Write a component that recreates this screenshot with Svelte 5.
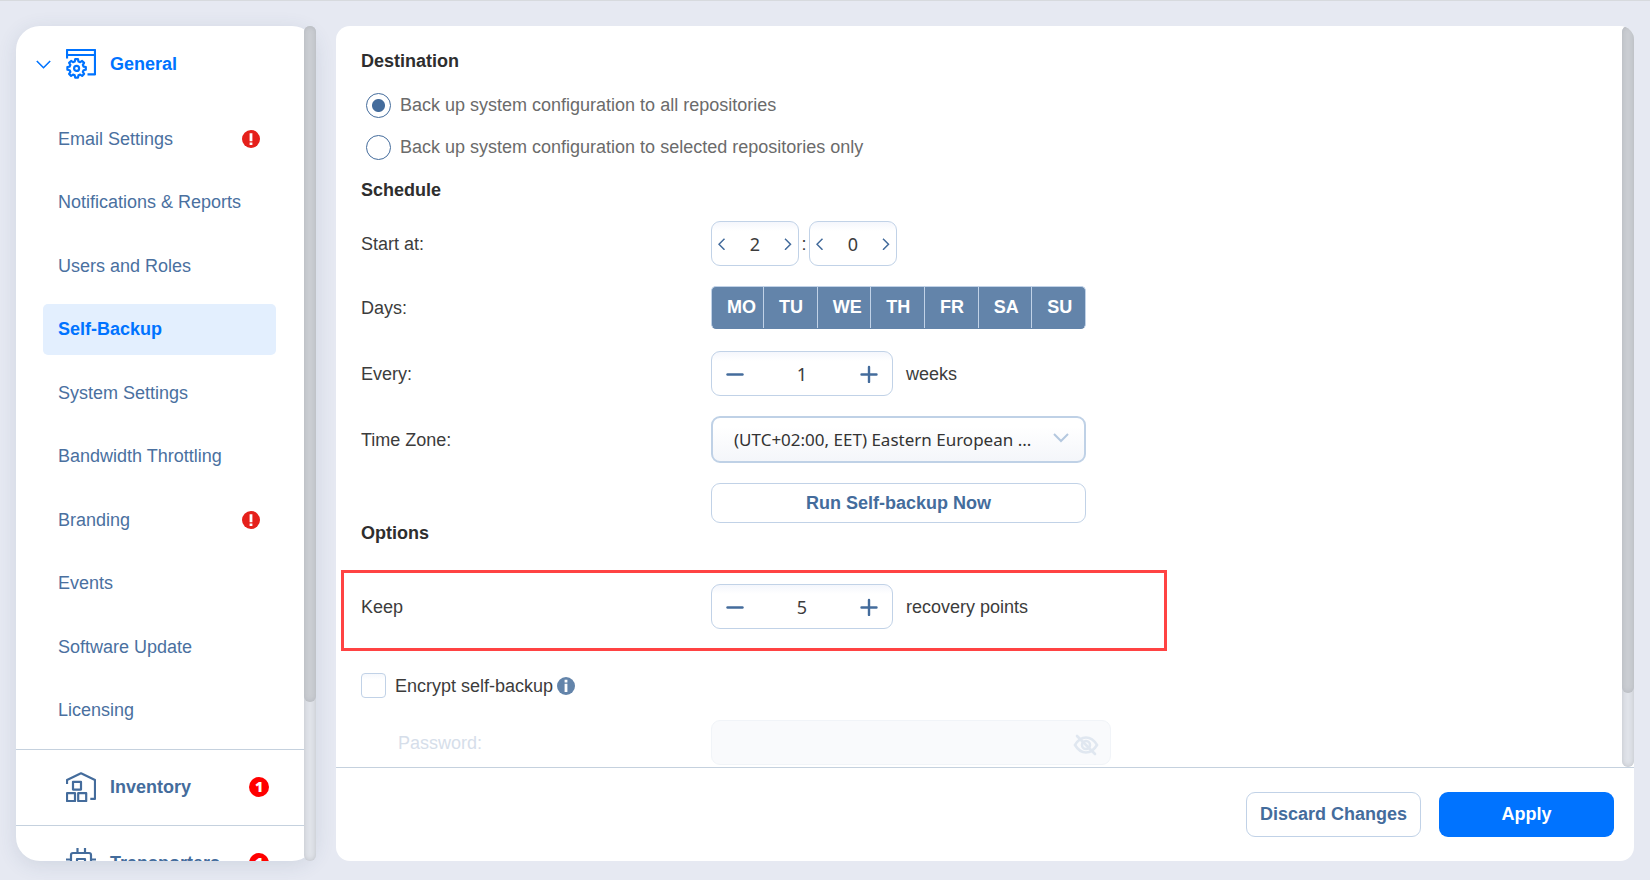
<script>
  const pages = [
    { label: 'Email Settings', alert: true },
    { label: 'Notifications & Reports' },
    { label: 'Users and Roles' },
    { label: 'Self-Backup' },
    { label: 'System Settings' },
    { label: 'Bandwidth Throttling' },
    { label: 'Branding', alert: true },
    { label: 'Events' },
    { label: 'Software Update' },
    { label: 'Licensing' }
  ];
  const dayNames = ['MO', 'TU', 'WE', 'TH', 'FR', 'SA', 'SU'];

  let current = $state('Self-Backup');
  let target = $state('all');
  let hour = $state(2);
  let minute = $state(0);
  let weeks = $state(1);
  let points = $state(5);
  let encrypt = $state(false);
  let days = $state(dayNames.map(() => true));

  // Outline of an eight-toothed gear around (cx, cy).
  function gear(cx, cy, outer, inner) {
    const pts = [];
    for (let i = 0; i < 8; i++) {
      const a = (i * Math.PI) / 4 - Math.PI / 2;
      for (const [r, d] of [[inner, -0.26], [outer, -0.15], [outer, 0.15], [inner, 0.26]]) {
        pts.push(`${(cx + r * Math.cos(a + d)).toFixed(2)} ${(cy + r * Math.sin(a + d)).toFixed(2)}`);
      }
    }
    return `M${pts.join('L')}Z`;
  }
  const gearPath = gear(10.6, 19.4, 9.3, 7.2);
</script>

{#snippet stepper(id, name, value, step)}
  <div class="stepper">
    <button type="button" aria-label="Decrease" onclick={() => step(-1)}>
      <svg width="18" height="18" viewBox="0 0 18 18"><path d="M1.5 9.5H16.5" /></svg>
    </button>
    <input {id} type="text" aria-label={name} {value} readonly />
    <button type="button" aria-label="Increase" onclick={() => step(1)}>
      <svg width="18" height="18" viewBox="0 0 18 18"><path d="M1.5 9.5H16.5M9 2V17" /></svg>
    </button>
  </div>
{/snippet}

{#snippet spinner(id, name, value, step)}
  <div class="spinner">
    <button type="button" aria-label="Previous" onclick={() => step(-1)}>
      <svg width="8" height="12" viewBox="0 0 8 12"><path d="M6.5 .8L1 6.3L6.5 11.8" /></svg>
    </button>
    <input {id} type="text" aria-label={name} {value} readonly />
    <button type="button" aria-label="Next" onclick={() => step(1)}>
      <svg width="8" height="12" viewBox="0 0 8 12"><path d="M1 .8L6.5 6.3L1 11.8" /></svg>
    </button>
  </div>
{/snippet}

<div class="page">
  <nav class="sidebar">
    <div class="menu">
      <section>
        <a class="group active" href="#general">
          <svg class="chevron" width="15" height="9" viewBox="0 0 15 9"><path d="M.8 1L7.5 7.7L14.2 1" /></svg>
          <svg class="icon" width="30" height="30" viewBox="0 0 30 30">
            <path d="M1 9.5V1H29V25.3H21.5M1 6H29" />
            <path d={gearPath} />
            <circle cx="10.6" cy="19.4" r="2.5" />
          </svg>
          <span>General</span>
        </a>
        <ul>
          {#each pages as page}
            <li>
              <a
                href="#page"
                class:selected={page.label === current}
                onclick={(e) => { e.preventDefault(); current = page.label; }}
              >
                <span>{page.label}</span>
                {#if page.alert}
                  <svg width="18" height="18" viewBox="0 0 18 18">
                    <circle cx="9" cy="9" r="9" fill="#e5201b" />
                    <path d="M9 3.2V11.2M9 12.6V15" stroke="#fff" stroke-width="2.8" />
                  </svg>
                {/if}
              </a>
            </li>
          {/each}
        </ul>
      </section>
      <section class="ruled">
        <a class="group" href="#inventory">
          <i class="chevron"></i>
          <svg class="icon" width="30" height="30" viewBox="0 0 30 30">
            <path d="M1 12V8L15 1.3L29 8V26.8H24.3" />
            <rect x="7" y="9.8" width="8" height="7.8" />
            <rect x="1" y="21.2" width="8" height="7.8" />
            <rect x="12.2" y="21.2" width="8" height="7.8" />
          </svg>
          <span>Inventory</span>
          <b class="count">1</b>
        </a>
      </section>
      <section class="ruled">
        <a class="group" href="#transporters">
          <i class="chevron"></i>
          <svg class="icon" width="30" height="30" viewBox="0 0 30 30">
            <rect x="5" y="5" width="20" height="20" rx="2" />
            <rect x="11" y="11" width="8" height="8" />
            <path d="M11.5 0V5M19 0V5M11.5 25V30M19 25V30M0 11.5H5M0 19H5M25 11.5H30M25 19H30" />
          </svg>
          <span>Transporters</span>
          <b class="count">1</b>
        </a>
      </section>
    </div>
    <div class="track"><div class="thumb"></div></div>
  </nav>

  <main>
    <div class="body">
      <form class="content" onsubmit={(e) => e.preventDefault()}>
        <h2>Destination</h2>
        <div class="radios">
          <label><input type="radio" name="target" value="all" bind:group={target} /> Back up system configuration to all repositories</label>
          <label><input type="radio" name="target" value="selected" bind:group={target} /> Back up system configuration to selected repositories only</label>
        </div>

        <h2>Schedule</h2>
        <div class="row start">
          <label for="hour">Start at:</label>
          <div class="time">
            {@render spinner('hour', 'Hour', hour, (d) => (hour = (hour + d + 24) % 24))}
            <span>:</span>
            {@render spinner('minute', 'Minute', minute, (d) => (minute = (minute + d + 60) % 60))}
          </div>
        </div>
        <div class="row">
          <span>Days:</span>
          <div class="days">
            {#each dayNames as day, i}
              <button type="button" aria-pressed={days[i]} onclick={() => (days[i] = !days[i])}>{day}</button>
            {/each}
          </div>
        </div>
        <div class="row every">
          <label for="weeks">Every:</label>
          <div class="amount">
            {@render stepper('weeks', 'Weeks', weeks, (d) => (weeks = Math.max(1, weeks + d)))}
            <span>weeks</span>
          </div>
        </div>
        <div class="row">
          <label for="zone">Time Zone:</label>
          <div class="select">
            <select id="zone"><option>(UTC+02:00, EET) Eastern European ...</option></select>
            <svg width="16" height="10" viewBox="0 0 16 10"><path d="M1 1L8 8L15 1" /></svg>
          </div>
        </div>
        <div class="row">
          <span></span>
          <button type="button" class="run">Run Self-backup Now</button>
        </div>

        <h2>Options</h2>
        <div class="highlight">
          <div class="row">
            <label for="points">Keep</label>
            <div class="amount">
              {@render stepper('points', 'Recovery points', points, (d) => (points = Math.max(1, points + d)))}
              <span>recovery points</span>
            </div>
          </div>
        </div>
        <div class="encrypt">
          <input id="encrypt" type="checkbox" bind:checked={encrypt} />
          <label for="encrypt">Encrypt self-backup</label>
          <svg width="18" height="18" viewBox="0 0 18 18">
            <circle cx="9" cy="9" r="9" fill="#6384aa" />
            <path d="M9 2.8V5.4M9 6.8V15" stroke="#fff" stroke-width="2.8" />
          </svg>
        </div>
        <div class="row secret">
          <label for="password">Password:</label>
          <div class="password">
            <input id="password" type="password" disabled={!encrypt} />
            <svg width="26" height="22" viewBox="0 0 26 22">
              <path d="M2 11C5 6 9 3.5 13 3.5S21 6 24 11C21 16 17 18.5 13 18.5S5 16 2 11Z" />
              <circle cx="13" cy="11" r="4" />
              <path d="M4 2L22 20" />
            </svg>
          </div>
        </div>
      </form>
      <div class="track"><div class="thumb"></div></div>
    </div>
    <footer>
      <button type="button" class="discard">Discard Changes</button>
      <button type="button" class="apply">Apply</button>
    </footer>
  </main>
</div>

<style>
  :global(body) {
    background: #e6e9f2;
  }
  .page, .page :global(*) {
    box-sizing: border-box;
  }
  .page {
    display: grid;
    grid-template-columns: 300px 1fr;
    gap: 20px;
    height: 100vh;
    padding: 25px 16px 19px;
    border-top: 1px solid #d7dade;
    font-family: "Liberation Sans", Arial, sans-serif;
    font-size: 18px;
    line-height: 20px;
    color: #3c3c3c;
  }
  button, input, select {
    margin: 0;
    padding: 0;
    font: inherit;
    color: inherit;
  }
  button {
    border: 0;
    background: none;
    cursor: pointer;
  }
  svg {
    flex: none;
    fill: none;
  }
  a {
    text-decoration: none;
    color: inherit;
  }

  .track {
    flex: none;
    width: 12px;
    border-radius: 6px;
    background: #e0e3e9;
    box-shadow: inset 0 0 5px rgba(90, 96, 104, 0.25);
  }
  .thumb {
    border-radius: 6px;
    background: #cacdd2;
    box-shadow: inset 0 0 5px rgba(90, 96, 104, 0.2);
  }

  .sidebar {
    display: flex;
    min-height: 0;
    border-radius: 24px;
    background: #fff;
    box-shadow: 0 4px 20px rgba(50, 70, 110, 0.12);
    color: #4a709f;
  }
  .sidebar .thumb {
    height: 81%;
  }
  .menu {
    flex: 1;
    overflow: hidden;
    border-radius: 24px 0 0 24px;
  }
  .ruled {
    border-top: 1px solid #c5d1de;
  }
  .group {
    display: flex;
    align-items: center;
    height: 75px;
    padding: 0 35px 2px 20px;
    font-weight: bold;
    color: #446c9c;
  }
  .active {
    height: 76px;
    padding-bottom: 0;
    color: #0073ff;
  }
  .group span {
    flex: 1;
  }
  .chevron {
    width: 15px;
    margin-right: 15px;
    stroke: currentColor;
    stroke-width: 1.6;
  }
  .icon {
    margin-right: 14px;
    stroke: currentColor;
    stroke-width: 2.2;
    stroke-linejoin: round;
  }
  .count {
    width: 20px;
    border-radius: 50%;
    background: #f00;
    color: #fff;
    font-family: "Noto Sans", sans-serif;
    font-size: 14px;
    text-align: center;
  }
  ul {
    display: flex;
    flex-direction: column;
    justify-content: space-between;
    min-height: 636px;
    margin: 11px 28px 0 27px;
    padding: 0 0 13px;
    list-style: none;
  }
  li a {
    display: flex;
    align-items: center;
    justify-content: space-between;
    height: 51px;
    padding: 0 16px 0 15px;
    border-radius: 5px;
    white-space: nowrap;
  }
  li a.selected {
    background: #e3effe;
    font-weight: bold;
    color: #0073ff;
  }

  main {
    display: flex;
    flex-direction: column;
    min-width: 0;
    min-height: 0;
    overflow: hidden;
    border-radius: 14px;
    background: #fff;
  }
  .body {
    display: flex;
    flex: 1;
    min-height: 0;
  }
  .body .thumb {
    height: 90%;
  }
  .content {
    flex: 1;
    overflow: hidden;
    padding: 25px 25px 0;
  }
  h2 {
    margin: 0;
    font-size: 18px;
    line-height: 20px;
    color: #2e2e2e;
  }
  .radios {
    padding: 13px 5px 12px;
    color: #6b6b6b;
  }
  .radios label {
    display: flex;
    align-items: center;
    gap: 9px;
    height: 42px;
  }
  input[type="radio"] {
    appearance: none;
    width: 25px;
    height: 25px;
    border: 1px solid #446c9c;
    border-radius: 50%;
  }
  input[type="radio"]:checked {
    background: radial-gradient(circle, #446c9c 6px, transparent 7px);
  }

  .row {
    display: grid;
    grid-template-columns: 350px 1fr;
    align-items: center;
    margin-top: 20px;
  }
  .start {
    margin-top: 21px;
  }
  .every {
    margin-top: 22px;
  }
  .time, .amount {
    display: flex;
    align-items: center;
  }
  .time span {
    width: 10px;
    text-align: center;
  }
  .amount {
    gap: 13px;
  }
  .spinner, .stepper {
    display: flex;
    height: 45px;
    border: 1px solid #c1d2e7;
    border-radius: 9px;
    background: linear-gradient(#f4f6fc, #fff 9px);
    font-family: "Noto Sans", sans-serif;
  }
  .spinner {
    width: 88px;
  }
  .stepper {
    width: 182px;
  }
  .spinner input, .stepper input {
    flex: 1;
    min-width: 0;
    border: 0;
    background: none;
    text-align: center;
  }
  .spinner button, .stepper button {
    display: grid;
    place-items: center;
    width: 20px;
    stroke: #446c9c;
  }
  .spinner button {
    stroke-width: 1.5;
  }
  .stepper button {
    width: 46px;
    stroke-width: 2.4;
    stroke-linecap: round;
  }
  .days {
    display: grid;
    grid-template-columns: 51px repeat(6, 1fr);
    width: 375px;
    height: 43px;
    overflow: hidden;
    border: 1px solid #c1d2e7;
    border-bottom-color: #6384aa;
    border-radius: 5px;
    background: #6384aa;
  }
  .days button {
    padding: 0 0 2px 15px;
    font-weight: bold;
    text-align: left;
    color: #fff;
  }
  .days button + button {
    border-left: 1px solid #c1d2e7;
  }
  .days button[aria-pressed="false"] {
    background: #fff;
    color: #446c9c;
  }
  .select {
    display: grid;
    align-items: center;
    width: 375px;
  }
  .select > * {
    grid-area: 1 / 1;
  }
  select {
    appearance: none;
    width: 100%;
    height: 47px;
    padding: 0 40px 0 21px;
    border: 2px solid #bfd1e6;
    border-radius: 9px;
    background: linear-gradient(#fff 20%, #f4f6fa);
    font-family: "Noto Sans", sans-serif;
    font-size: 17px;
    color: #333;
  }
  .select svg {
    justify-self: end;
    margin: 0 17px 4px 0;
    stroke: #b4c8df;
    stroke-width: 2;
    pointer-events: none;
  }
  .run {
    width: 375px;
    height: 40px;
    border: 1px solid #c1d2e7;
    border-radius: 9px;
    font-weight: bold;
    color: #446c9c;
  }
  .highlight {
    width: 826px;
    height: 81px;
    margin: 27px 0 22px -20px;
    padding: 11px 17px;
    border: 3px solid #ff4343;
  }
  .highlight .row {
    margin: 0;
  }
  .encrypt {
    display: flex;
    align-items: center;
  }
  .encrypt label {
    margin: 0 4px 0 9px;
  }
  input[type="checkbox"] {
    appearance: none;
    width: 25px;
    height: 25px;
    border: 1px solid #c1d2e7;
    border-radius: 4px;
    background: linear-gradient(#f6f8fc, #fff 6px);
  }
  input[type="checkbox"]:checked {
    background: #6384aa;
  }
  .secret {
    margin-top: 22px;
    color: #d6deea;
  }
  .secret label {
    padding-left: 37px;
  }
  .password {
    display: grid;
    align-items: center;
    width: 400px;
  }
  .password > * {
    grid-area: 1 / 1;
  }
  .password input {
    width: 100%;
    height: 45px;
    padding: 0 48px 0 16px;
    border: 1px solid #f1f4f8;
    border-radius: 9px;
    background: #f9fafc;
  }
  .password svg {
    justify-self: end;
    margin: 4px 12px 0 0;
    stroke: #e0e7f0;
    stroke-width: 2.6;
    stroke-linecap: round;
  }

  footer {
    display: flex;
    flex: none;
    align-items: center;
    justify-content: flex-end;
    gap: 18px;
    height: 94px;
    padding: 0 20px;
    border-top: 1px solid #c5d1de;
  }
  footer button {
    width: 175px;
    height: 45px;
    padding-bottom: 2px;
    border-radius: 9px;
    font-weight: bold;
  }
  .discard {
    border: 1px solid #c1d2e7;
    color: #446c9c;
  }
  .apply {
    background: #0073ff;
    color: #fff;
  }
</style>
